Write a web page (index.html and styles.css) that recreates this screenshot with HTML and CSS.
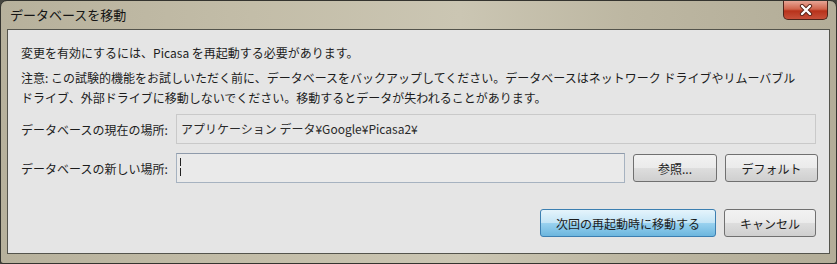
FILE: index.html
```html
<!DOCTYPE html>
<html lang="ja">

<head>
    <meta charset="UTF-8">
    <title>データベースを移動</title>
    <link rel="stylesheet" href="styles.css">
</head>

<body>
    <div class="window">
        <div class="titlebar">
            <span class="title">データベースを移動</span>
            <div class="close">
                <svg width="18" height="12" viewBox="0 0 18 12">
                    <path d="M5 2 L13 10 M13 2 L5 10" stroke="#5a2418" stroke-width="4.2" stroke-linecap="round" fill="none"/>
                    <path d="M5 2 L13 10 M13 2 L5 10" stroke="#ffffff" stroke-width="2.4" stroke-linecap="round" fill="none"/>
                </svg>
            </div>
        </div>

        <div class="client">
            <p class="msg">変更を有効にするには、Picasa を再起動する必要があります。</p>
            <p class="note">注意: この試験的機能をお試しいただく前に、データベースをバックアップしてください。データベースはネットワーク ドライブやリムーバブル<br>ドライブ、外部ドライブに移動しないでください。移動するとデータが失われることがあります。</p>

            <div class="row">
                <label class="label">データベースの現在の場所:</label>
                <div class="field readonly">アプリケーション データ¥Google¥Picasa2¥</div>
            </div>

            <div class="row row-new">
                <label class="label">データベースの新しい場所:</label>
                <div class="field edit"><span class="caret"></span></div>
                <button class="btn btn-browse">参照...</button>
                <button class="btn btn-default">デフォルト</button>
            </div>

            <div class="actions">
                <button class="btn btn-primary">次回の再起動時に移動する</button>
                <button class="btn btn-cancel">キャンセル</button>
            </div>
        </div>
    </div>
</body>

</html>
```

FILE: styles.css
```css
body {
    margin: 0;
    padding: 0;
    background-color: #45453f;
    font-family: "Noto Sans CJK JP", "Noto Sans", sans-serif;
    font-size: 12px;
    color: #1c1c1c;
}

.window {
    width: 837px;
    height: 264px;
    box-sizing: border-box;
    border: 1px solid #34342f;
    border-radius: 7px 7px 3px 3px;
    padding: 0 6px 9px 6px;
    background: linear-gradient(90deg, #b7b19c 0%, #c3bda8 30%, #cbc6b3 55%, #bdb7a2 75%, #b3ad98 100%);
    display: flex;
    flex-direction: column;
}

.titlebar {
    height: 28px;
    display: flex;
    align-items: flex-start;
    justify-content: space-between;
}

.title {
    padding: 5px 0 0 3px;
    font-size: 13px;
    line-height: 18px;
    color: #151515;
}

.close {
    width: 45px;
    height: 19px;
    box-sizing: border-box;
    margin-right: 2px;
    border: 1px solid #4e241b;
    border-top: none;
    border-radius: 0 0 5px 5px;
    background: linear-gradient(180deg, #e7a595 0%, #d0644c 45%, #b8321b 55%, #c7503a 100%);
    display: flex;
    align-items: center;
    justify-content: center;
}

.client {
    flex: 1;
    border: 1px solid #54544c;
    background-color: #e5e5e5;
    padding: 13px 13px 0 13px;
}

.msg,
.note {
    margin: 0;
    line-height: 20px;
    white-space: nowrap;
}

.note {
    margin-top: 5px;
}

.row {
    display: flex;
    align-items: center;
    margin-top: 6px;
    height: 30px;
}

.row-new {
    margin-top: 9px;
    margin-right: -2px;
}

.label {
    width: 155px;
    flex-shrink: 0;
}

.field {
    flex: 1;
    height: 30px;
    box-sizing: border-box;
    padding: 0 4px;
    line-height: 28px;
    color: #2a2a2a;
}

.readonly {
    border: 1px solid #c9c9c9;
    background-color: #e6e6e6;
}

.edit {
    border: 1px solid #a6b2c0;
    border-top-color: #8f9bab;
    background-color: #eaeaea;
    position: relative;
}

.caret {
    position: absolute;
    left: 3px;
    top: 4px;
    width: 1px;
    height: 19px;
    background: repeating-linear-gradient(180deg, #222 0, #222 8px, transparent 8px, transparent 10px);
}

.btn {
    font-family: inherit;
    font-size: 12px;
    color: #1c1c1c;
    height: 28px;
    box-sizing: border-box;
    border: 1px solid #707070;
    border-radius: 3px;
    background: linear-gradient(180deg, #f2f2f2 0%, #ebebeb 48%, #dddddd 52%, #cfcfcf 100%);
    padding: 0;
    margin-left: 8px;
    flex-shrink: 0;
}

.btn-browse {
    width: 84px;
}

.btn-default {
    width: 93px;
}

.actions {
    display: flex;
    justify-content: flex-end;
    margin-top: 26px;
}

.btn-primary {
    width: 176px;
    border-color: #3c7fb1;
    background: linear-gradient(180deg, #e5f4fc 0%, #c4e5f6 48%, #98d1ef 52%, #6cb6de 100%);
}

.btn-cancel {
    width: 92px;
}
```
